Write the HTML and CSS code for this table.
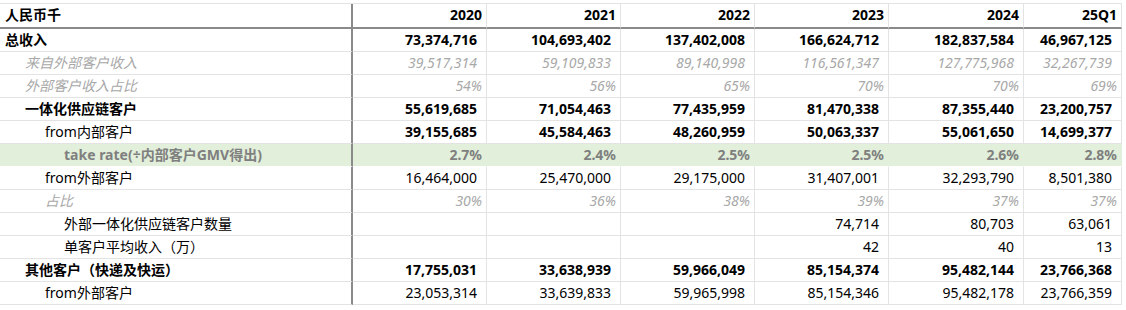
FILE: index.html
```html
<!DOCTYPE html>
<html lang="zh-CN">
<head>
    <meta charset="UTF-8">
    <meta name="viewport" content="width=device-width, initial-scale=1.0">
    <title>收入拆分</title>
    <link rel="stylesheet" href="styles.css">
</head>
<body>
    <div class="sheet">
        <div class="row head">
            <div class="cell label">人民币千</div>
            <div class="cell">2020</div>
            <div class="cell">2021</div>
            <div class="cell">2022</div>
            <div class="cell">2023</div>
            <div class="cell">2024</div>
            <div class="cell">25Q1</div>
        </div>

        <div class="row bold">
            <div class="cell label">总收入</div>
            <div class="cell num">73,374,716</div>
            <div class="cell num">104,693,402</div>
            <div class="cell num">137,402,008</div>
            <div class="cell num">166,624,712</div>
            <div class="cell num">182,837,584</div>
            <div class="cell num">46,967,125</div>
        </div>

        <div class="row muted">
            <div class="cell label lv1">来自外部客户收入</div>
            <div class="cell num">39,517,314</div>
            <div class="cell num">59,109,833</div>
            <div class="cell num">89,140,998</div>
            <div class="cell num">116,561,347</div>
            <div class="cell num">127,775,968</div>
            <div class="cell num">32,267,739</div>
        </div>

        <div class="row muted">
            <div class="cell label lv1">外部客户收入占比</div>
            <div class="cell">54%</div>
            <div class="cell">56%</div>
            <div class="cell">65%</div>
            <div class="cell">70%</div>
            <div class="cell">70%</div>
            <div class="cell">69%</div>
        </div>

        <div class="row bold">
            <div class="cell label lv1">一体化供应链客户</div>
            <div class="cell num">55,619,685</div>
            <div class="cell num">71,054,463</div>
            <div class="cell num">77,435,959</div>
            <div class="cell num">81,470,338</div>
            <div class="cell num">87,355,440</div>
            <div class="cell num">23,200,757</div>
        </div>

        <div class="row bold-nums">
            <div class="cell label lv2">from内部客户</div>
            <div class="cell num">39,155,685</div>
            <div class="cell num">45,584,463</div>
            <div class="cell num">48,260,959</div>
            <div class="cell num">50,063,337</div>
            <div class="cell num">55,061,650</div>
            <div class="cell num">14,699,377</div>
        </div>

        <div class="row rate">
            <div class="cell label lv3">take rate(÷内部客户GMV得出)</div>
            <div class="cell">2.7%</div>
            <div class="cell">2.4%</div>
            <div class="cell">2.5%</div>
            <div class="cell">2.5%</div>
            <div class="cell">2.6%</div>
            <div class="cell">2.8%</div>
        </div>

        <div class="row">
            <div class="cell label lv2">from外部客户</div>
            <div class="cell num">16,464,000</div>
            <div class="cell num">25,470,000</div>
            <div class="cell num">29,175,000</div>
            <div class="cell num">31,407,001</div>
            <div class="cell num">32,293,790</div>
            <div class="cell num">8,501,380</div>
        </div>

        <div class="row muted">
            <div class="cell label lv2">占比</div>
            <div class="cell">30%</div>
            <div class="cell">36%</div>
            <div class="cell">38%</div>
            <div class="cell">39%</div>
            <div class="cell">37%</div>
            <div class="cell">37%</div>
        </div>

        <div class="row">
            <div class="cell label lv3">外部一体化供应链客户数量</div>
            <div class="cell num"></div>
            <div class="cell num"></div>
            <div class="cell num"></div>
            <div class="cell num">74,714</div>
            <div class="cell num">80,703</div>
            <div class="cell num">63,061</div>
        </div>

        <div class="row">
            <div class="cell label lv3">单客户平均收入（万）</div>
            <div class="cell num"></div>
            <div class="cell num"></div>
            <div class="cell num"></div>
            <div class="cell num">42</div>
            <div class="cell num">40</div>
            <div class="cell num">13</div>
        </div>

        <div class="row bold">
            <div class="cell label lv1">其他客户（快递及快运）</div>
            <div class="cell num">17,755,031</div>
            <div class="cell num">33,638,939</div>
            <div class="cell num">59,966,049</div>
            <div class="cell num">85,154,374</div>
            <div class="cell num">95,482,144</div>
            <div class="cell num">23,766,368</div>
        </div>

        <div class="row">
            <div class="cell label lv2">from外部客户</div>
            <div class="cell num">23,053,314</div>
            <div class="cell num">33,639,833</div>
            <div class="cell num">59,965,998</div>
            <div class="cell num">85,154,346</div>
            <div class="cell num">95,482,178</div>
            <div class="cell num">23,766,359</div>
        </div>
    </div>
</body>
</html>
```

FILE: styles.css
```css
body {
    margin: 0;
    background-color: #ffffff;
    font-family: "Noto Sans", "Noto Sans CJK SC", sans-serif;
    font-size: 14px;
    color: #000000;
}

.sheet {
    width: 1122px;
    margin-top: 3px;
    border-top: 1px solid #e3e3e3;
}

.row {
    display: grid;
    grid-template-columns: 353px 134px 134px 134px 134px 135px 98px;
    height: 23px;
}

.cell {
    box-sizing: border-box;
    border-right: 1px solid #e3e3e3;
    border-bottom: 1px solid #e3e3e3;
    padding-right: 4px;
    text-align: right;
    line-height: 21px;
    white-space: nowrap;
    overflow: hidden;
}

.cell.num {
    padding-right: 9px;
}

.cell.label {
    text-align: left;
    padding-left: 5px;
    border-right: 2px solid #8a8a8a;
}

.lv1 { padding-left: 25px !important; }
.lv2 { padding-left: 45px !important; }
.lv3 { padding-left: 64px !important; }

.head {
    height: 25px;
    font-weight: 700;
}

.head .cell {
    border-bottom: 2px solid #8a8a8a;
    line-height: 22px;
}

.bold {
    font-weight: 700;
}

.bold-nums .num {
    font-weight: 700;
}

.muted {
    color: #a8a8a8;
    font-style: italic;
}

.rate {
    background-color: #e2efda;
    color: #7f7f7f;
    font-weight: 700;
}

.rate .cell {
    border-right-color: #e2efda;
    border-bottom-color: #ffffff;
}

.rate .cell.label {
    border-right-color: #8a8a8a;
}
```
